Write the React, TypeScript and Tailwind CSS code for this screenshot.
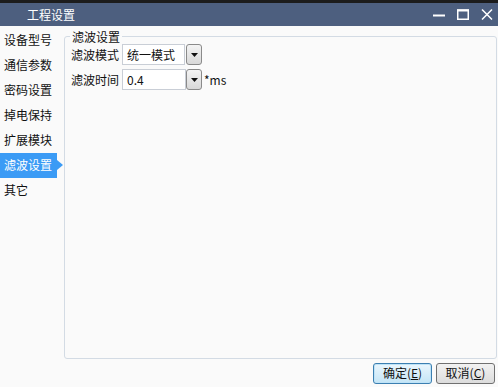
import React from 'react';

const NAV = ['设备型号', '通信参数', '密码设置', '掉电保持', '扩展模块', '滤波设置', '其它'];

function DropBtn() {
  return (
    <div className="w-[16px] h-[21px] rounded-[3px] border border-[#8a8a8a] bg-gradient-to-b from-[#f4f4f4] to-[#d8d8d8] flex items-center justify-center">
      <svg width="7" height="4" viewBox="0 0 7 4"><path d="M0 0h7L3.5 4z" fill="#111" /></svg>
    </div>
  );
}

export default function App() {
  return (
    <div className="w-[498px] h-[387px] flex flex-col bg-[#fafafa] text-[12px] text-[#111] leading-none" style={{ fontFamily: '"Noto Sans CJK SC", "Liberation Sans", sans-serif' }}>
      <div className="h-[3px] bg-[#1c1c1c]" />
      <div className="h-[23px] bg-[#4d5f7f] flex items-center text-white">
        <span className="ml-[27px] text-[12px]">工程设置</span>
        <div className="ml-auto flex items-center gap-[12px] mr-[5px]">
          <svg width="12" height="12" viewBox="0 0 12 12"><path d="M0 6.5h12" stroke="#fff" strokeWidth="2" /></svg>
          <svg width="12" height="11" viewBox="0 0 12 11"><rect x="0.75" y="1" width="10.5" height="9.25" fill="none" stroke="#fff" strokeWidth="1.5" /><path d="M0 1.5h12" stroke="#fff" strokeWidth="2" /></svg>
          <svg width="12" height="11" viewBox="0 0 12 11"><path d="M1 0.5l10 10M11 0.5l-10 10" stroke="#fff" strokeWidth="1.5" /></svg>
        </div>
      </div>
      <div className="flex-1 flex flex-col">
        <div className="flex flex-1">
          <div className="w-[64px] pt-[1.5px] flex flex-col">
            {NAV.map((n) =>
              n === '滤波设置' ? (
                <div key={n} className="h-[25px] flex items-center">
                  <div className="w-[57px] h-full bg-[#3b9bf5] text-white flex items-center pl-[4px]">{n}</div>
                  <svg width="6" height="10" viewBox="0 0 6 10"><path d="M0 0l6 5-6 5z" fill="#3b9bf5" /></svg>
                </div>
              ) : (
                <div key={n} className="h-[25px] flex items-center pl-[4px]">{n}</div>
              )
            )}
          </div>
          <fieldset className="flex-1 mt-[2px] mr-[1px] border border-[#d3dbe4] rounded-[3px] pl-[6px] flex flex-col gap-[4px]">
            <legend className="ml-[-1px] px-[2px] leading-[17px]">滤波设置</legend>
            <div className="flex items-center mt-[-1px]">
              <span className="w-[51px]">滤波模式</span>
              <div className="w-[63px] h-[21px] bg-white border border-[#c9ced6] flex items-center pl-[4px]">统一模式</div>
              <div className="ml-[1px]"><DropBtn /></div>
            </div>
            <div className="flex items-center">
              <span className="w-[51px]">滤波时间</span>
              <div className="w-[64px] h-[21px] bg-white border border-[#c9ced6] flex items-center pl-[4px]">0.4</div>
              <DropBtn />
              <span className="ml-[2px]">*ms</span>
            </div>
          </fieldset>
        </div>
        <div className="h-[28px] flex items-center justify-end gap-[4px] pr-[3px]">
          <button className="w-[59px] h-[21px] rounded-[3px] border border-[#3c7fb1] bg-gradient-to-b from-[#eaf6fd] to-[#c4e5f6] shadow-[inset_0_0_0_1px_#bfe3f7] flex items-center justify-center">
            确定(<span className="underline">E</span>)
          </button>
          <button className="w-[59px] h-[21px] rounded-[3px] border border-[#707070] bg-gradient-to-b from-[#f2f2f2] to-[#dcdcdc] flex items-center justify-center">
            取消(<span className="underline">C</span>)
          </button>
        </div>
      </div>
    </div>
  );
}
